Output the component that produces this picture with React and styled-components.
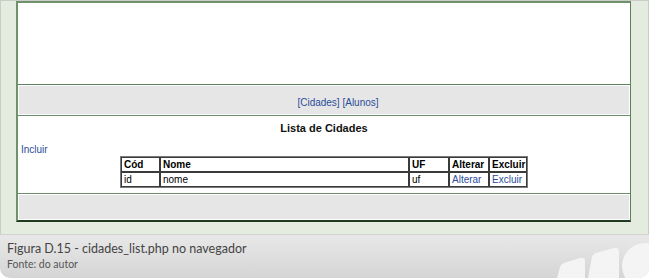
import React from "react";
import styled, { createGlobalStyle } from "styled-components";

const Global = createGlobalStyle`
  html, body { margin: 0; padding: 0; background: #ffffff; }
  body { font-family: "Liberation Sans", Arial, sans-serif; }
`;

const Figure = styled.div`
  position: relative;
  width: 649px;
  height: 278px;
  display: flex;
  flex-direction: column;
  overflow: hidden;
  border-radius: 0 0 10px 10px;
`;

const Screen = styled.div`
  box-sizing: border-box;
  height: 234px;
  background: #e4ebdf;
  border: 1px solid #c9cdc6;
  border-bottom: none;
  padding: 0 17px 0 15px;
`;

const Frame = styled.div`
  display: flex;
  flex-direction: column;
  background: #ffffff;
  border-top: 2px solid #6f926d;
  border-left: 2px solid #6f926d;
  border-right: 1px solid #5c7f5a;
  border-bottom: 2px solid #203c20;
`;

const Blank = styled.div`
  height: 81px;
  border-bottom: 1px solid #5d7f5b;
`;

const Band = styled.div`
  box-sizing: border-box;
  height: ${(p) => p.$h}px;
  padding: 1px;
  background: #ffffff;
  border-bottom: ${(p) => (p.$line ? "1px solid #6c8e6a" : "none")};
`;

const BandInner = styled.div`
  height: 100%;
  background: #e6e6e6;
  display: flex;
  justify-content: center;
  align-items: flex-end;
  padding: 0 0 5px ${(p) => p.$shift || 0}px;
  box-sizing: border-box;
  font-size: 10px;
  line-height: 12px;
  color: #222;
`;

const Link = styled.a`
  color: #2b4c9a;
  text-decoration: none;
`;

const Content = styled.div`
  box-sizing: border-box;
  height: 78px;
  padding: 5px 0 0 3px;
  border-bottom: 1px solid #6c8e6a;
  display: flex;
  flex-direction: column;
`;

const Title = styled.div`
  text-align: center;
  font-weight: bold;
  font-size: 11px;
  line-height: 14px;
  color: #111;
  padding-right: 3px;
`;

const Incluir = styled(Link)`
  font-size: 10px;
  line-height: 12px;
  margin-top: 9px;
  align-self: flex-start;
`;

const Table = styled.table`
  align-self: center;
  margin-right: 3px;
  border-collapse: separate;
  border-spacing: 0;
  table-layout: fixed;
  width: 408px;
  border: 1px solid #7a7a7a;
  font-size: 10px;
`;

const Cell = styled.td`
  box-sizing: border-box;
  width: ${(p) => p.$w}px;
  height: 15px;
  padding: 0 2px;
  border: 1px solid #3a3a3a;
  line-height: 13px;
  font-weight: ${(p) => (p.$head ? "bold" : "normal")};
  color: #000;
  text-align: left;
  white-space: nowrap;
`;

const Caption = styled.div`
  position: relative;
  flex: 1;
  box-sizing: border-box;
  border-top: 1px solid #d2d2d2;
  background: linear-gradient(#e8e8e8, #d5d5d5);
  padding: 5px 0 0 7px;
  font-family: Lato, "Open Sans", sans-serif;
  color: #444;
`;

const CaptionTitle = styled.div`
  font-size: 12.5px;
  line-height: 17px;
`;

const CaptionSource = styled.div`
  font-size: 10.5px;
  line-height: 15px;
  color: #555;
`;

const Deco = styled.svg`
  position: absolute;
  right: 0;
  bottom: 0;
`;

const cols = [39, 249, 40, 40, 38];

export default function App() {
  return (
    <>
      <Global />
      <Figure>
        <Screen>
          <Frame>
            <Blank />
            <Band $h={31} $line>
              <BandInner $shift={28}>
                <Link href="#">[Cidades]</Link>&nbsp;<Link href="#">[Alunos]</Link>
              </BandInner>
            </Band>
            <Content>
              <Title>Lista de Cidades</Title>
              <Incluir href="#">Incluir</Incluir>
              <Table>
                <tbody>
                  <tr>
                    {["Cód", "Nome", "UF", "Alterar", "Excluir"].map((h, i) => (
                      <Cell as="th" key={h} $w={cols[i]} $head>
                        {h}
                      </Cell>
                    ))}
                  </tr>
                  <tr>
                    <Cell $w={cols[0]}>id</Cell>
                    <Cell $w={cols[1]}>nome</Cell>
                    <Cell $w={cols[2]}>uf</Cell>
                    <Cell $w={cols[3]}>
                      <Link href="#">Alterar</Link>
                    </Cell>
                    <Cell $w={cols[4]}>
                      <Link href="#">Excluir</Link>
                    </Cell>
                  </tr>
                </tbody>
              </Table>
            </Content>
            <Band $h={26}>
              <BandInner />
            </Band>
          </Frame>
        </Screen>
        <Caption>
          <CaptionTitle>Figura D.15 - cidades_list.php no navegador</CaptionTitle>
          <CaptionSource>Fonte: do autor</CaptionSource>
          <Deco width="95" height="44" viewBox="554 234 95 44">
            <path d="M557 278 L560 267 Q561 264 564 263 L580 258 Q585 257 585 261 L585 278 Z" fill="#f4f4f4" />
            <path d="M588 278 L592 257 Q593 254 596 253 L614 248 Q619 247 619 252 L619 278 Z" fill="#f4f4f4" />
            <circle cx="645" cy="266" r="23" fill="#f4f4f4" />
          </Deco>
        </Caption>
      </Figure>
    </>
  );
}
